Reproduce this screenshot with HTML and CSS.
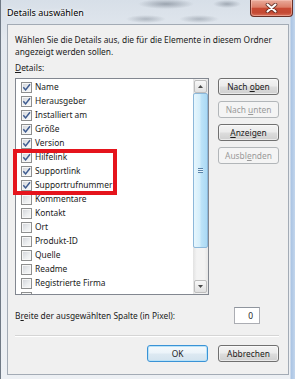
FILE: index.html
```html
<!DOCTYPE html>
<html lang="de">
<head>
<meta charset="utf-8">
<title>Details auswählen</title>
<link rel="stylesheet" href="styles.css">
</head>
<body>
<div class="window">
  <div class="titlebar">
    <span class="title">Details auswählen</span>
    <div class="close">
      <svg width="13" height="10" viewBox="0 0 13 10"><path d="M2.5 1.5 L10.5 8.5 M10.5 1.5 L2.5 8.5" stroke="#4a2119" stroke-opacity="0.75" stroke-width="3.8" stroke-linecap="round"/><path d="M2.5 1.5 L10.5 8.5 M10.5 1.5 L2.5 8.5" stroke="#ffffff" stroke-width="2.1" stroke-linecap="round"/></svg>
    </div>
  </div>
  <div class="client">
    <p class="intro">Wählen Sie die Details aus, die für die Elemente in diesem Ordner<br>angezeigt werden sollen.</p>
    <div class="label"><u>D</u>etails:</div>
    <div class="main">
      <div class="listbox">
        <ul class="items">
          <li class="item"><span class="cb"><svg width="9" height="9" viewBox="0 0 9 9"><path d="M1.3 4.3 L3.6 6.9 L8 1.2" fill="none" stroke="#3f5c90" stroke-width="1.5"/></svg></span>Name</li>
          <li class="item"><span class="cb"><svg width="9" height="9" viewBox="0 0 9 9"><path d="M1.3 4.3 L3.6 6.9 L8 1.2" fill="none" stroke="#3f5c90" stroke-width="1.5"/></svg></span>Herausgeber</li>
          <li class="item"><span class="cb"><svg width="9" height="9" viewBox="0 0 9 9"><path d="M1.3 4.3 L3.6 6.9 L8 1.2" fill="none" stroke="#3f5c90" stroke-width="1.5"/></svg></span>Installiert am</li>
          <li class="item"><span class="cb"><svg width="9" height="9" viewBox="0 0 9 9"><path d="M1.3 4.3 L3.6 6.9 L8 1.2" fill="none" stroke="#3f5c90" stroke-width="1.5"/></svg></span>Größe</li>
          <li class="item"><span class="cb"><svg width="9" height="9" viewBox="0 0 9 9"><path d="M1.3 4.3 L3.6 6.9 L8 1.2" fill="none" stroke="#3f5c90" stroke-width="1.5"/></svg></span>Version</li>
          <li class="item"><span class="cb"><svg width="9" height="9" viewBox="0 0 9 9"><path d="M1.3 4.3 L3.6 6.9 L8 1.2" fill="none" stroke="#3f5c90" stroke-width="1.5"/></svg></span>Hilfelink</li>
          <li class="item"><span class="cb"><svg width="9" height="9" viewBox="0 0 9 9"><path d="M1.3 4.3 L3.6 6.9 L8 1.2" fill="none" stroke="#3f5c90" stroke-width="1.5"/></svg></span>Supportlink</li>
          <li class="item"><span class="cb"><svg width="9" height="9" viewBox="0 0 9 9"><path d="M1.3 4.3 L3.6 6.9 L8 1.2" fill="none" stroke="#3f5c90" stroke-width="1.5"/></svg></span>Supportrufnummer</li>
          <li class="item"><span class="cb"></span>Kommentare</li>
          <li class="item"><span class="cb"></span>Kontakt</li>
          <li class="item"><span class="cb"></span>Ort</li>
          <li class="item"><span class="cb"></span>Produkt-ID</li>
          <li class="item"><span class="cb"></span>Quelle</li>
          <li class="item"><span class="cb"></span>Readme</li>
          <li class="item"><span class="cb"></span>Registrierte Firma</li>
          <li class="item"><span class="cb"></span></li>
        </ul>
        <div class="scrollbar">
          <div class="sb-btn"><svg width="5" height="3" viewBox="0 0 5 3"><path d="M0 3 L2.5 0 L5 3 Z" fill="#4a4a4a"/></svg></div>
          <div class="thumb"><span class="grip"></span></div>
          <div class="track"></div>
          <div class="sb-btn"><svg width="5" height="3" viewBox="0 0 5 3"><path d="M0 0 L2.5 3 L5 0 Z" fill="#4a4a4a"/></svg></div>
        </div>
        <div class="highlight"></div>
      </div>
      <div class="side">
        <button class="btn">Nach <u>o</u>ben</button>
        <button class="btn disabled">Nach <u>u</u>nten</button>
        <button class="btn"><u>A</u>nzeigen</button>
        <button class="btn disabled">Ausbl<u>e</u>nden</button>
      </div>
    </div>
    <div class="width-row">
      <span>B<u>r</u>eite der ausgewählten Spalte (in Pixel):</span>
      <div class="input">0</div>
    </div>
    <div class="sep"></div>
    <div class="footer">
      <button class="btn default">OK</button>
      <button class="btn">Abbrechen</button>
    </div>
  </div>
</div>
</body>
</html>
```

FILE: styles.css
```css
* { box-sizing: border-box; }
html, body { margin: 0; padding: 0; }
body {
  width: 295px;
  height: 379px;
  overflow: hidden;
  font-family: "Noto Sans", "Open Sans", sans-serif;
  font-size: 8.4px;
  color: #1b1b1b;
}
u { text-decoration-thickness: 1px; text-underline-offset: 1px; }

.window {
  width: 295px;
  height: 379px;
  display: flex;
  flex-direction: column;
  border-left: 1px solid #6f7985;
  background:
    radial-gradient(ellipse 28px 5px at 165px 4px, rgba(105,115,128,.55), rgba(105,115,128,0)),
    radial-gradient(ellipse 14px 4px at 226px 4px, rgba(105,115,128,.5), rgba(105,115,128,0)),
    radial-gradient(ellipse 20px 4px at 145px 19px, rgba(105,115,128,.4), rgba(105,115,128,0)),
    radial-gradient(ellipse 20px 4px at 198px 19px, rgba(105,115,128,.4), rgba(105,115,128,0)),
    linear-gradient(to right, rgba(0,0,0,0) 289px, #aac4e4 290px, #c9daee 295px),
    linear-gradient(#d7dfe8, #e4e9ef 40px, #edf0f4);
}

.titlebar {
  height: 24px;
  display: flex;
  justify-content: space-between;
  align-items: flex-start;
}
.title {
  padding: 7px 0 0 6px;
  line-height: 12px;
  font-size: 9px;
  color: #000;
  text-shadow: 0 0 4px #fff, 0 0 2px #fff;
}
.close {
  width: 43px;
  height: 17px;
  margin-right: 2px;
  border: 1px solid #6a3027;
  border-top: none;
  border-radius: 0 0 4px 4px;
  background: linear-gradient(#e9ab9b 0%, #dc7e68 45%, #c84a33 52%, #c44a34 80%, #d9735c 100%);
  box-shadow: inset 0 0 0 1px rgba(255,210,200,.45);
  display: flex;
  align-items: center;
  justify-content: center;
}
.close svg { display: block; }

.client {
  flex: 1;
  margin: 0 6px 4px 6px;
  background: #f0f0f0;
  border: 1px solid #a3abb5;
  padding: 9px 9px 0 7px;
  display: flex;
  flex-direction: column;
}
.intro { margin: 0; line-height: 12px; }
.label { margin-top: 4px; line-height: 12px; }

.main {
  margin-top: 4px;
  display: flex;
  gap: 9px;
}
.listbox {
  position: relative;
  width: 194px;
  height: 217px;
  border: 1px solid #828790;
  background: #fff;
  display: flex;
}
.items {
  list-style: none;
  margin: 0;
  padding: 1px 0 0 0;
  flex: 1;
  overflow: hidden;
}
.item {
  height: 14px;
  display: flex;
  align-items: center;
  padding-left: 5px;
  white-space: nowrap;
  line-height: 14px;
}
.cb {
  flex: none;
  width: 11px;
  height: 11px;
  margin-right: 3px;
  border: 1px solid #8e8f8f;
  background: linear-gradient(135deg, #cfd2d7 0%, #eceef0 60%, #fafafa 100%);
  box-shadow: inset 0 0 0 1px #f7f7f7;
}
.cb svg { display: block; }

.scrollbar {
  flex: none;
  width: 15px;
  display: flex;
  flex-direction: column;
  padding: 1px 0;
  background: linear-gradient(to right, #e2e2e2, #f3f3f3 25%, #f3f3f3 75%, #e6e6e6);
}
.sb-btn {
  height: 13px;
  margin: 0 1px;
  border: 1px solid #bdbdbd;
  border-radius: 2px;
  background: linear-gradient(#f8f8f8, #e0e0e0);
  display: flex;
  align-items: center;
  justify-content: center;
}
.sb-btn svg { display: block; }
.thumb {
  height: 155px;
  border: 1px solid #8db8da;
  border-radius: 2px;
  background: linear-gradient(to right, #e7f6fd 0%, #d4eefb 45%, #bde3f8 55%, #aad9f4 100%);
  display: flex;
  align-items: center;
  justify-content: center;
}
.grip {
  width: 5px;
  height: 5px;
  background: repeating-linear-gradient(#5a83a8 0 1px, #e6f4fc 1px 2px);
}
.track { flex: 1; }

.highlight {
  position: absolute;
  left: -3px;
  top: 70px;
  width: 104px;
  height: 46px;
  border: 4px solid #e5141c;
  pointer-events: none;
}

.side {
  display: flex;
  flex-direction: column;
  gap: 6px;
}
.btn {
  width: 61px;
  height: 17px;
  padding: 0;
  margin: 0;
  font: inherit;
  color: #1b1b1b;
  line-height: 15px;
  text-align: center;
  border: 1px solid #707070;
  border-radius: 3px;
  background: linear-gradient(#f3f3f3 0%, #ebebeb 48%, #dddddd 52%, #cfcfcf 100%);
  box-shadow: inset 0 0 0 1px rgba(255,255,255,.55);
}
.btn.disabled {
  border-color: #b2b6b9;
  background: #f4f4f4;
  color: #9a9a9a;
  box-shadow: none;
}
.btn.default {
  border-color: #3a93d6;
  box-shadow: inset 0 0 0 1px #b9e2f8;
  background: linear-gradient(#f5f9fc 0%, #ebf3f9 48%, #dde9f2 52%, #d3e3ee 100%);
}

.width-row {
  margin-top: 12px;
  height: 17px;
  display: flex;
  justify-content: space-between;
  align-items: center;
}
.input {
  width: 26px;
  height: 17px;
  margin-right: 19px;
  border: 1px solid #abadb3;
  border-top-color: #8f959e;
  background: #fff;
  text-align: right;
  padding-right: 6px;
  line-height: 15px;
}
.sep {
  margin-top: 11px;
  height: 2px;
  border-top: 1px solid #d5d5d5;
  border-bottom: 1px solid #ffffff;
}
.footer {
  margin-top: 8px;
  display: flex;
  justify-content: flex-end;
  gap: 10px;
}
```
